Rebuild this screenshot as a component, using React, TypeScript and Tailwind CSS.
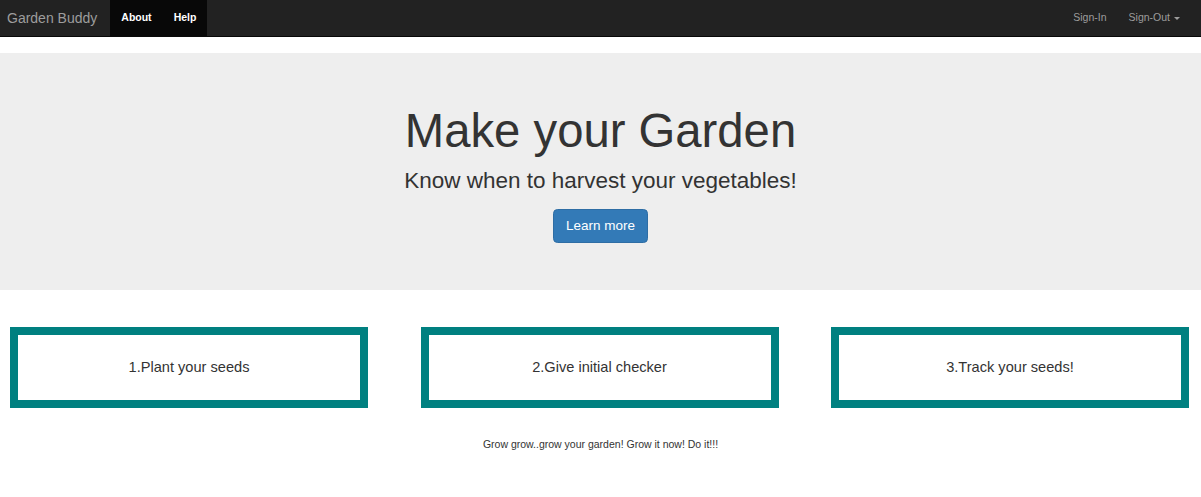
const steps = ["1.Plant your seeds", "2.Give initial checker", "3.Track your seeds!"];

const App = () => {
  return (
    <div className="min-h-[497px] bg-white text-[#333] font-['Liberation_Sans',Arial,sans-serif]">
      <nav className="h-[37px] bg-[#222] border-b border-[#080808] flex items-stretch justify-between">
        <div className="flex items-stretch">
          <a href="#" className="pl-[7px] pr-[13px] flex items-center text-[14px] text-[#9d9d9d]">
            Garden Buddy
          </a>
          <ul className="flex items-stretch bg-[#080808]">
            <li className="flex items-center px-[11px] text-[10.5px] font-bold text-white">About</li>
            <li className="flex items-center px-[11px] text-[10.5px] font-bold text-white">Help</li>
          </ul>
        </div>
        <ul className="flex items-stretch pr-[10px]">
          <li className="flex items-center px-[11px] text-[10.5px] text-[#9d9d9d]">Sign-In</li>
          <li className="flex items-center px-[11px] text-[10.5px] text-[#9d9d9d]">
            Sign-Out
            <span className="ml-[4px] mt-[1px] w-0 h-0 border-x-[3px] border-x-transparent border-t-[3px] border-t-[#9d9d9d]" />
          </li>
        </ul>
      </nav>

      <section className="mt-[16px] h-[237px] bg-[#eee] flex flex-col items-center pt-[52px]">
        <h1 className="text-[47.25px] leading-[1.1] font-normal">Make your Garden</h1>
        <h2 className="mt-[12px] text-[22.5px] leading-[1.1] font-normal">Know when to harvest your vegetables!</h2>
        <button className="mt-[15px] h-[34px] px-[12px] rounded-[4.5px] border border-[#2e6da4] bg-[#337ab7] text-white text-[13.5px] leading-none">
          Learn more
        </button>
      </section>

      <div className="mt-[37px] flex justify-between pl-[10px] pr-[12px]">
        {steps.map((s) => (
          <div
            key={s}
            className="w-[358px] h-[81px] border-[8px] border-[#008080] flex items-center justify-center text-[14.6px]"
          >
            {s}
          </div>
        ))}
      </div>

      <p className="mt-[29px] text-center text-[10.5px] leading-[15px]">
        Grow grow..grow your garden! Grow it now! Do it!!!
      </p>
    </div>
  );
};

export default App;
